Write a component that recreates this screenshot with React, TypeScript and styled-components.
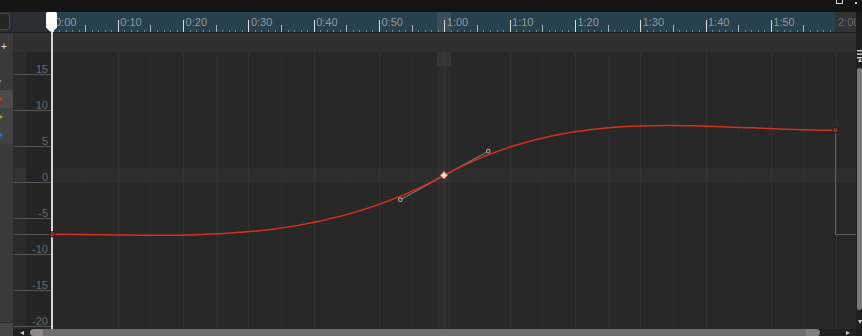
import React from "react";
import styled, { createGlobalStyle } from "styled-components";

const T0 = 52.5; // page x of 0:00
const STEP = 65.3; // px per 10 seconds
const SEC = STEP / 10;

const GlobalStyle = createGlobalStyle`
  html, body { margin: 0; padding: 0; background: #141414; }
  body { font-family: "Liberation Sans", Arial, sans-serif; }
`;

const Frame = styled.div`
  position: relative;
  width: 862px;
  height: 336px;
  overflow: hidden;
  display: grid;
  grid-template-columns: 13px 843px 6px;
  grid-template-rows: 12px 20px 20px 277px 7px;
  background: #141414;
`;

/* ---------- top bar ---------- */
const TopBar = styled.div`
  grid-column: 1 / -1;
  grid-row: 1;
  display: flex;
  justify-content: flex-end;
  align-items: flex-start;
  gap: 12px;
  padding-right: 5px;
  background: #141414;
  overflow: hidden;
`;
const WindowIcon = styled.div`
  width: 7px;
  height: 7px;
  margin-top: -3px;
  border: 1px solid #d8d8d8;
  box-sizing: border-box;
`;
const DotIcon = styled.div`
  width: 2px;
  height: 2px;
  margin-top: 2px;
  background: #c8c8c8;
`;

/* ---------- ruler row ---------- */
const CornerCell = styled.div`
  grid-column: 1;
  grid-row: 2;
  background: #2b2e31;
  padding-top: 1px;
`;
const CornerBox = styled.div`
  width: 10px;
  height: 17px;
  box-sizing: border-box;
  border: 1px solid #474747;
  border-left: none;
  border-radius: 0 3px 3px 0;
  background: #252525;
`;
const Ruler = styled.div`
  grid-column: 2;
  grid-row: 2;
  position: relative;
  display: flex;
  overflow: hidden;
`;
const RulerLead = styled.div`
  flex: 0 0 39px;
  background: #2b2f33;
`;
const RulerTrack = styled.div`
  flex: 1;
  min-width: 0;
  display: flex;
  overflow: hidden;
  background: #27414d;
`;
const RulerTail = styled.div`
  flex: 0 0 21px;
  overflow: hidden;
  background: #333333;
`;
const RulerLabel = styled.div<{ $muted?: boolean }>`
  flex: 0 0 ${STEP}px;
  box-sizing: border-box;
  padding-left: 3px;
  font-size: 11px;
  line-height: 21px;
  white-space: nowrap;
  color: ${(p) => (p.$muted ? "#6c6c6c" : "#8d9aa1")};
`;
const RulerTicks = styled.svg`
  position: absolute;
  left: 0;
  top: 0;
  pointer-events: none;
`;
const RulerEnd = styled.div`
  grid-column: 3;
  grid-row: 2;
  background: #1b1b1b;
`;

/* ---------- sub header row ---------- */
const AddCell = styled.div`
  grid-column: 1;
  grid-row: 3;
  box-sizing: border-box;
  border-top: 1px solid #1d1d1d;
  background: #3a3a3a;
  color: #e4e4e4;
  font-size: 10px;
  line-height: 10px;
  padding: 9px 0 0 1px;
`;
const SubHeader = styled.div`
  grid-column: 2;
  grid-row: 3;
  box-sizing: border-box;
  border-top: 1px solid #1d1d1d;
  background: #2f2f2f;
`;
const MenuCell = styled.div`
  grid-column: 3;
  grid-row: 3;
  background: #1e1e1e;
  position: relative;
  z-index: 3;
  padding-top: 13px;
  padding-left: 1px;
  overflow: visible;
`;

/* ---------- track list ---------- */
const TrackList = styled.div`
  grid-column: 1;
  grid-row: 4 / 6;
  display: flex;
  flex-direction: column;
  background: #3a3a3a;
`;
const TrackSpacer = styled.div`
  flex: 0 0 20px;
`;
const Track = styled.div<{ $tone: "plain" | "active" | "soft" }>`
  flex: 0 0 18px;
  display: flex;
  align-items: center;
  background: ${(p) =>
    p.$tone === "active" ? "#4b4b4b" : p.$tone === "soft" ? "#424242" : "#3a3a3a"};
`;
const TrackMark = styled.span<{ $color: string; $dot?: boolean }>`
  width: 0;
  height: 0;
  border-top: ${(p) => (p.$dot ? 1 : 2)}px solid transparent;
  border-bottom: ${(p) => (p.$dot ? 1 : 2)}px solid transparent;
  border-left: ${(p) => (p.$dot ? 2 : 3)}px solid ${(p) => p.$color};
`;
const TrackFill = styled.div`
  flex: 1;
`;
const TrackFooter = styled.div`
  flex: 0 0 14px;
  box-sizing: border-box;
  border-top: 1px solid #2a2a2a;
  background: #454545;
`;

/* ---------- graph ---------- */
const Graph = styled.div`
  grid-column: 2;
  grid-row: 4;
  display: flex;
  background: #282828;
`;
const Axis = styled.div`
  position: relative;
  flex: 0 0 39px;
  display: flex;
  flex-direction: column;
  overflow: hidden;
  background: linear-gradient(to right, #2b2b2b 0 13px, #252525 13px);
`;
const AxisRow = styled.div<{ $first?: boolean }>`
  flex: 0 0 ${(p) => (p.$first ? 23 : 36)}px;
  box-sizing: border-box;
  margin-left: 1px;
  padding-right: 4px;
  border-bottom: 1px solid #565656;
  display: flex;
  align-items: flex-end;
  justify-content: flex-end;
  font-size: 11px;
  line-height: 9px;
  color: #6a6a6a;
`;
const AxisHighlight = styled.div`
  position: absolute;
  left: 1px;
  top: 116px;
  width: 12px;
  height: 14px;
  background: #333333;
`;
const AxisStub = styled.div`
  position: absolute;
  left: 1px;
  top: 182px;
  width: 37px;
  height: 1px;
  background: #565656;
`;
const Plot = styled.svg`
  position: relative;
  z-index: 2;
  flex: 0 0 804px;
  overflow: visible;
  display: block;
`;

/* ---------- scrollbars ---------- */
const VScroll = styled.div`
  grid-column: 3;
  grid-row: 4;
  display: flex;
  flex-direction: column;
  align-items: flex-end;
  background: #202020;
  padding: 6px 0 5px;
`;
const VThumb = styled.div`
  flex: 0 0 242px;
  width: 5px;
  margin-top: 6px;
  border-radius: 3px;
  background: #7a7a7a;
`;
const Gap = styled.div`
  flex: 1;
`;
const ArrowUp = styled.span`
  width: 0;
  height: 0;
  border-left: 2.5px solid transparent;
  border-right: 2.5px solid transparent;
  border-bottom: 4px solid #c8c8c8;
`;
const ArrowDown = styled(ArrowUp)`
  border-bottom: none;
  border-top: 4px solid #c8c8c8;
`;
const HScroll = styled.div`
  grid-column: 2;
  grid-row: 5;
  display: flex;
  align-items: center;
  background: #202020;
  padding: 0 6px 0 7px;
`;
const HThumb = styled.div`
  flex: 0 0 790px;
  height: 7px;
  margin-left: 6px;
  border-radius: 4px;
  background: linear-gradient(
    to right,
    #8a8a8a 0,
    #8a8a8a 13px,
    #6e6e6e 13px,
    #6e6e6e calc(100% - 14px),
    #7f7f7f calc(100% - 14px)
  );
`;
const ArrowLeft = styled.span`
  width: 0;
  height: 0;
  border-top: 2.5px solid transparent;
  border-bottom: 2.5px solid transparent;
  border-right: 4px solid #c8c8c8;
`;
const ArrowRight = styled(ArrowLeft)`
  border-right: none;
  border-left: 4px solid #c8c8c8;
`;
const ScrollCorner = styled.div`
  grid-column: 3;
  grid-row: 5;
  background: #1b1b1b;
`;

/* ---------- playhead ---------- */
const Playhead = styled.svg`
  position: absolute;
  left: 46px;
  top: 12px;
  z-index: 1;
  pointer-events: none;
`;

const px = (v: number) => Math.round(v) + 0.5;

const labels = ["0:00", "0:10", "0:20", "0:30", "0:40", "0:50", "1:00", "1:10", "1:20", "1:30", "1:40", "1:50"];
const values = ["15", "10", "5", "0", "-5", "-10", "-15", "-20"];

const curve =
  "M 52.5 234.3 C 183 234.3, 313.5 247.3, 444 175.4 C 574.5 103.5, 704.7 130.3, 835.5 130.3";

export default function App() {
  const minor = Array.from({ length: 121 }, (_, i) => i);
  const majors = Array.from({ length: 13 }, (_, i) => i);
  return (
    <>
      <GlobalStyle />
      <Frame>
        <TopBar>
          <WindowIcon />
          <DotIcon />
        </TopBar>

        <CornerCell>
          <CornerBox />
        </CornerCell>
        <Ruler>
          <RulerLead />
          <RulerTrack>
            {labels.map((l) => (
              <RulerLabel key={l}>{l}</RulerLabel>
            ))}
          </RulerTrack>
          <RulerTail>
            <RulerLabel $muted>2:00</RulerLabel>
          </RulerTail>
          <RulerTicks width={843} height={20} viewBox="13 12 843 20">
            <rect x={437} y={12} width={14} height={20} fill="rgba(255,255,255,0.08)" />
            {minor.map((i) =>
              i % 10 === 0 ? null : i % 5 === 0 ? (
                <line key={i} x1={px(T0 + i * SEC)} x2={px(T0 + i * SEC)} y1={25} y2={32} stroke="#a8b3b8" />
              ) : (
                <line key={i} x1={px(T0 + i * SEC)} x2={px(T0 + i * SEC)} y1={30} y2={32} stroke="#6d848f" />
              )
            )}
            {majors.slice(0, 12).map((k) => (
              <line key={k} x1={px(T0 + k * STEP)} x2={px(T0 + k * STEP)} y1={20} y2={32} stroke="#dcdcdc" />
            ))}
          </RulerTicks>
        </Ruler>
        <RulerEnd />

        <AddCell>+</AddCell>
        <SubHeader />
        <MenuCell>
          <svg width={5} height={9} viewBox="0 0 5 9">
            <rect x={0} y={0} width={5} height={1.4} fill="#cfcfcf" />
            <rect x={0} y={3.5} width={5} height={1.4} fill="#cfcfcf" />
            <rect x={0} y={7} width={5} height={1.4} fill="#cfcfcf" />
          </svg>
        </MenuCell>

        <TrackList>
          <TrackSpacer />
          <Track $tone="plain">
            <TrackMark $color="#9a9a9a" $dot />
            <TrackFill />
          </Track>
          <Track $tone="active">
            <TrackMark $color="#d8321f" />
            <TrackFill />
          </Track>
          <Track $tone="soft">
            <TrackMark $color="#7fae2a" />
            <TrackFill />
          </Track>
          <Track $tone="soft">
            <TrackMark $color="#2f6fe0" />
            <TrackFill />
          </Track>
          <TrackFill />
          <TrackFooter />
        </TrackList>

        <Graph>
          <Axis>
            <AxisHighlight />
            {values.map((v, i) => (
              <AxisRow key={v} $first={i === 0}>
                {v}
              </AxisRow>
            ))}
            <AxisStub />
          </Axis>
          <Plot width={804} height={277} viewBox="52 52 804 277">
            {majors.map((k) => (
              <line
                key={"m" + k}
                x1={px(T0 + (k + 0.5) * STEP)}
                x2={px(T0 + (k + 0.5) * STEP)}
                y1={52}
                y2={329}
                stroke="#2c2c2c"
              />
            ))}
            {majors.slice(1).map((k) => (
              <line key={"M" + k} x1={px(T0 + k * STEP)} x2={px(T0 + k * STEP)} y1={52} y2={329} stroke="#313131" />
            ))}
            <rect x={53} y={168} width={803} height={15} fill="rgba(255,255,255,0.025)" />
            <rect x={437} y={52} width={14} height={277} fill="rgba(255,255,255,0.025)" />
            <rect x={437} y={52} width={14} height={14} fill="rgba(255,255,255,0.04)" />
            <path d="M 835.5 130 V 234.5 H 856" fill="none" stroke="#5e5e5e" />
            <line x1={400.3} y1={199.7} x2={488.3} y2={151.2} stroke="#767676" strokeWidth={1.3} />
            <path d={curve} fill="none" stroke="#d7301e" strokeWidth={1.5} />
            <circle cx={400.3} cy={199.7} r={1.8} fill="#2a2a2a" stroke="#a4a4a4" strokeWidth={1.1} />
            <circle cx={488.3} cy={151.2} r={1.8} fill="#2a2a2a" stroke="#a4a4a4" strokeWidth={1.1} />
            <path
              d="M 444 171.6 L 447.6 175.3 L 444 179 L 440.4 175.3 Z"
              fill="#f4cdc4"
              stroke="#e0725f"
              strokeWidth={0.9}
            />
            <circle cx={444} cy={175.3} r={1} fill="#ffffff" />
            <circle cx={52.5} cy={234.3} r={2.7} fill="#c9392a" stroke="#111" strokeWidth={1} />
            <circle cx={52.5} cy={234.3} r={0.9} fill="#2a1512" />
            <circle cx={835.5} cy={130.3} r={2.7} fill="#c9392a" stroke="#111" strokeWidth={1} />
            <circle cx={835.5} cy={130.3} r={0.9} fill="#2a1512" />
          </Plot>
        </Graph>
        <VScroll>
          <ArrowUp />
          <VThumb />
          <Gap />
          <ArrowDown />
        </VScroll>

        <HScroll>
          <ArrowLeft />
          <HThumb />
          <Gap />
          <ArrowRight />
        </HScroll>
        <ScrollCorner />

        <Playhead width={11} height={317} viewBox="0 0 11 317">
          <rect x={5} y={18} width={2} height={299} fill="#d6d6d6" />
          <path d="M0 1.5 Q0 0 1.5 0 H9.5 Q11 0 11 1.5 V15.5 L7 19.5 H4 L0 15.5 Z" fill="#ffffff" />
        </Playhead>
      </Frame>
    </>
  );
}
